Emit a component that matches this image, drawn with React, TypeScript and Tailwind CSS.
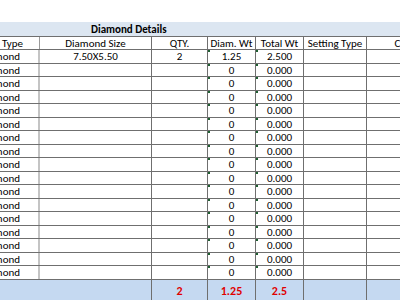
import React from "react";

const LINE = "border-[#6f6f6f]";
const widths = ["w-[40px]", "w-[112px]", "w-[56px]", "w-[48px]", "w-[48px]", "w-[63px]", "w-[80px]"];

function Mark() {
  return <span className="absolute left-0 top-0 w-[2px] h-[2px] bg-[#1f5f32]" />;
}

export default function App() {
  const rows = Array.from({ length: 17 }, (_, i) => i);
  const headers = ["Diamond Type", "Diamond Size", "QTY.", "Diam. Wt", "Total Wt", "Setting Type", "Color"];
  const footer = ["", "", "2", "1.25", "2.5", "", ""];
  return (
    <div
      className="w-[400px] h-[300px] overflow-hidden bg-white text-black text-[11px] leading-none"
      style={{ fontFamily: "Carlito, Lato, 'Liberation Sans', sans-serif" }}
    >
      <div className="w-[447px]">
        <div className={`mt-[22px] h-[15px] border-b ${LINE} bg-[#dce6f1] flex items-center pl-[91px] font-bold`}>
          Diamond Details
        </div>
        <div className={`flex h-[13px] border-b ${LINE}`}>
          {headers.map((h, c) => (
            <div
              key={c}
              className={`${widths[c]} shrink-0 h-full flex items-center whitespace-nowrap overflow-hidden ${
                c === 0 ? "justify-end pr-[16px] border-r border-[#9a9a9a]" : `justify-center border-r ${LINE}`
              }`}
            >
              {h}
            </div>
          ))}
        </div>
        {rows.map((i) => (
          <div key={i} className={`flex ${i % 2 === 0 ? "h-[14px]" : "h-[13px]"} border-b ${LINE}`}>
            <div className="w-[40px] shrink-0 h-full flex items-center justify-end pr-[18px] whitespace-nowrap overflow-hidden border-r-2 border-[#c4c4c4]">
              Diamond
            </div>
            <div className={`${widths[1]} shrink-0 h-full flex items-center justify-center border-r ${LINE}`}>
              {i === 0 ? "7.50X5.50" : ""}
            </div>
            <div className={`${widths[2]} shrink-0 h-full flex items-center justify-center border-r ${LINE}`}>
              {i === 0 ? "2" : ""}
            </div>
            <div className={`${widths[3]} relative shrink-0 h-full flex items-center justify-center border-r ${LINE}`}>
              <Mark />
              {i === 0 ? "1.25" : "0"}
            </div>
            <div className={`${widths[4]} relative shrink-0 h-full flex items-center justify-center border-r ${LINE}`}>
              <Mark />
              {i === 0 ? "2.500" : "0.000"}
            </div>
            <div className={`${widths[5]} shrink-0 h-full border-r ${LINE}`} />
            <div className={`${widths[6]} shrink-0 h-full border-r ${LINE}`} />
          </div>
        ))}
        <div className="flex h-[21px] bg-[#c5d9f1] font-bold text-[#e00000] text-[12px]">
          {footer.map((f, c) => (
            <div
              key={c}
              className={`${widths[c]} shrink-0 h-full flex items-center justify-center ${c === 0 ? "" : `border-r ${LINE}`}`}
            >
              {f}
            </div>
          ))}
        </div>
      </div>
    </div>
  );
}
